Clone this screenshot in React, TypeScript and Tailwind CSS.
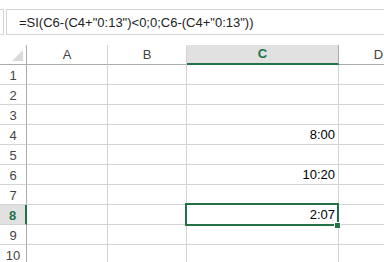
import React from "react";

const GREEN = "#217346";

const cols = [
  { key: "A", w: "w-[81px]" },
  { key: "B", w: "w-[79px]" },
  { key: "C", w: "w-[152px]" },
  { key: "D", w: "w-[80px]" },
];

const values: Record<number, string> = { 4: "8:00", 6: "10:20", 8: "2:07" };

export default function App() {
  const rows = Array.from({ length: 10 }, (_, i) => i + 1);

  return (
    <div className="relative w-[384px] h-[262px] overflow-hidden bg-white font-['Liberation_Sans',Arial,sans-serif] text-black">
      {/* Formula bar */}
      <div className="flex h-[45px] pt-[9px]">
        <div className="w-[4px] h-[26px] shrink-0 border-y border-r border-[#d4d4d4]" />
        <div className="ml-[2px] h-[26px] flex-1 border-y border-l border-[#d4d4d4] pl-[12px] pt-[1px] text-[13px] leading-[24px] whitespace-nowrap text-[#222]">
          =SI(C6-(C4+"0:13")&lt;0;0;C6-(C4+"0:13"))
        </div>
      </div>

      {/* Column headers */}
      <div className="flex h-[20px] text-[13px] text-[#444]">
        <div className="relative w-[27px] shrink-0 border-r border-b border-[#ababab]">
          <svg className="absolute right-[3px] bottom-[3px]" width="11" height="11" viewBox="0 0 11 11">
            <polygon points="11,0 11,11 0,11" fill="#dadada" />
          </svg>
        </div>
        {cols.map((c) =>
          c.key === "C" ? (
            <div
              key={c.key}
              className={`${c.w} shrink-0 flex items-center justify-center bg-[#e1e1e1] border-r border-r-[#ababab] border-b-2 border-b-[#217346] font-bold text-[#217346]`}
            >
              {c.key}
            </div>
          ) : (
            <div
              key={c.key}
              className={`${c.w} shrink-0 flex items-center justify-center border-r border-r-[#d4d4d4] border-b border-b-[#ababab]`}
            >
              {c.key}
            </div>
          )
        )}
      </div>

      {/* Grid rows */}
      {rows.map((r) => (
        <div key={r} className="flex h-[20px]">
          {r === 8 ? (
            <div className="w-[27px] shrink-0 flex items-center justify-center pt-[2px] bg-[#e1e1e1] border-r-2 border-r-[#217346] border-b border-b-[#d4d4d4] text-[13px] font-bold text-[#217346]">
              {r}
            </div>
          ) : (
            <div className="w-[27px] shrink-0 flex items-center justify-center pt-[2px] border-r border-r-[#ababab] border-b border-b-[#d4d4d4] text-[13px] text-[#444]">
              {r}
            </div>
          )}
          {cols.map((c) => (
            <div
              key={c.key}
              className={`${c.w} shrink-0 flex items-end justify-end pr-[3px] pb-[2px] border-r border-b border-[#d4d4d4] text-[13px] leading-[15px]`}
            >
              {c.key === "C" ? values[r] ?? "" : ""}
            </div>
          ))}
        </div>
      ))}

      {/* Active cell C8 */}
      <div className="absolute left-[185px] top-[203px] w-[154px] h-[23px] border-2 border-[#217346]" />
      <div className="absolute left-[334px] top-[222px] w-[7px] h-[7px] border border-white" style={{ backgroundColor: GREEN }} />
    </div>
  );
}
